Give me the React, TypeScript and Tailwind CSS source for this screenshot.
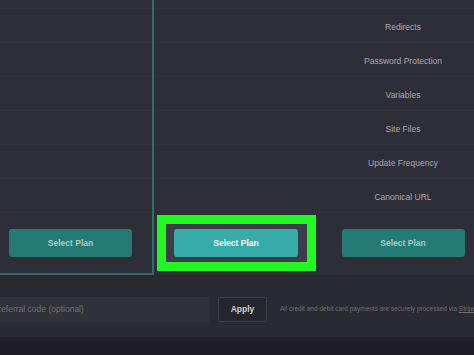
import React from 'react'

const features = [
  'Redirects',
  'Password Protection',
  'Variables',
  'Site Files',
  'Update Frequency',
  'Canonical URL',
]

function FeatureRows({ showText }: { showText: boolean }) {
  return (
    <>
      <div className="h-[9px] border-b border-[#31323c]" />
      {features.map((f) => (
        <div
          key={f}
          className="h-[34px] pt-[3px] border-b border-[#31323c] flex items-center justify-center text-[8.5px] text-[#a9aab3]"
        >
          {showText ? f : ''}
        </div>
      ))}
    </>
  )
}

export default function App() {
  return (
    <div
      className="w-[474px] h-[355px] overflow-hidden bg-[#1e1e24]"
      style={{ fontFamily: '"Liberation Sans", Arial, sans-serif' }}
    >
      <div className="-ml-[13px] w-[499px]">
        <div className="flex bg-[#2d2e38] h-[275px]">
          {/* left plan, highlighted border */}
          <div className="w-[167px] h-[275px] border-r-2 border-b-2 border-[#2f6f68] flex flex-col">
            <FeatureRows showText={false} />
            <div className="pt-[16px] flex justify-center pl-[2px]">
              <button className="w-[123px] h-[28px] rounded-[3px] bg-[#247a74] text-[#a9cbc7] text-[8.5px] font-bold">
                Select Plan
              </button>
            </div>
          </div>

          {/* middle plan */}
          <div className="w-[166px] flex flex-col">
            <FeatureRows showText={false} />
            <div className="pt-[2px] pl-[3px]">
              <div className="w-[159px] border-[9px] border-[#22f922] bg-[#3b3b4a] pt-[5px] pb-[5px] pl-[8px] pr-[9px]">
                <button className="w-[124px] h-[28px] rounded-[3px] bg-[#35aca8] text-white text-[8.5px] font-bold">
                  Select Plan
                </button>
              </div>
            </div>
          </div>

          {/* right plan */}
          <div className="w-[166px] flex flex-col">
            <FeatureRows showText={true} />
            <div className="pt-[16px] flex justify-center">
              <button className="w-[123px] h-[28px] rounded-[3px] bg-[#247a74] text-[#a9cbc7] text-[8.5px] font-bold">
                Select Plan
              </button>
            </div>
          </div>
        </div>

        <div className="h-[62px] bg-[#2a2a32] flex items-center pt-[6px]">
          <div className="w-[222px] h-[25px] bg-[#31313b] flex items-center pl-[8px] text-[8.5px] text-[#6d6e76]">
            Referral code (optional)
          </div>
          <button className="ml-[9px] w-[49px] h-[25px] bg-[#26262e] border border-[#3d3d47] rounded-[2px] text-[#d2d2d7] text-[8.5px] font-bold">
            Apply
          </button>
          <p className="ml-[13px] whitespace-nowrap text-[6.5px] text-[#6e6f77]">
            All credit and debit card payments are securely processed via{' '}
            <span className="underline">Stripe</span>.
          </p>
        </div>
      </div>
    </div>
  )
}
